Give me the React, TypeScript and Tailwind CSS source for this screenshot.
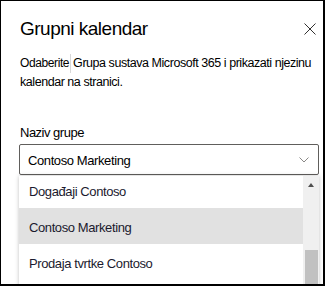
import React from "react"

// Items shown in the open group dropdown
const groups = ["Događaji Contoso", "Contoso Marketing", "Prodaja tvrtke Contoso"]

export default function App() {
  return (
    <div
      className="relative w-[325px] h-[286px] bg-white border-l border-t border-r-2 border-b-2 border-black overflow-hidden pl-[19px] text-black"
      style={{ fontFamily: '"Liberation Sans", Arial, sans-serif' }}
    >
      {/* Header */}
      <div className="flex items-start justify-between pt-[15px] pr-[7px]">
        <h1 className="text-[19px] leading-[26px] tracking-[-0.5px]">Grupni kalendar</h1>
        <button className="mt-[7px] text-[#323130]">
          <svg width="12" height="12" viewBox="0 0 12 12" fill="none" stroke="currentColor" strokeWidth="1">
            <path d="M0.5 0.5 L11.5 11.5 M11.5 0.5 L0.5 11.5" />
          </svg>
        </button>
      </div>

      {/* Description */}
      <p className="mt-[12px] text-[12.5px] leading-[19px] tracking-[-0.45px]">
        <span className="whitespace-nowrap">
          <span className="inline-block text-[12px] leading-[19px] tracking-[-0.4px] border-r border-[#d8d8d8] pr-[1px] mr-[2px]">
            Odaberite
          </span>
          Grupa sustava Microsoft 365 i prikazati njezinu
        </span>
        <br />
        kalendar na stranici.
      </p>

      {/* Group picker */}
      <label className="block mt-[31px] text-[13px] leading-[19px] tracking-[-0.5px]">Naziv grupe</label>
      <div className="relative -ml-px mt-[2px] w-[300px]">
        <div className="flex items-center justify-between h-[31px] border border-[#605e5c] rounded-[2px] pl-[8px] pr-[9px]">
          <span className="text-[13px] leading-[19px] pt-[2px] tracking-[-0.4px]">Contoso Marketing</span>
          <svg width="10" height="6" viewBox="0 0 10 6" fill="none" stroke="#8a8886" strokeWidth="1">
            <path d="M0.5 0.5 L5 5 L9.5 0.5" />
          </svg>
        </div>

        {/* Open list */}
        <div className="absolute left-0 top-[32px] w-[300px] h-[120px] flex bg-white shadow-[0_0_4px_rgba(0,0,0,0.25)] overflow-hidden">
          <div className="flex-1 -mt-[4px]">
            {groups.map((g, i) => (
              <div
                key={g}
                className={`h-[36px] pl-[10px] pt-[3px] text-[13px] leading-[33px] tracking-[-0.4px] text-[#1b1a2e] ${
                  i === 1 ? "bg-[#e1e1e1]" : ""
                }`}
              >
                {g}
              </div>
            ))}
          </div>
          {/* Scrollbar */}
          <div className="w-[16px] bg-[#f0f0f0] flex flex-col items-center">
            <svg className="mt-[7px]" width="6" height="4" viewBox="0 0 6 4">
              <path d="M0 4 L3 0 L6 4 Z" fill="#505050" />
            </svg>
            <div className="mt-[63px] w-[13px] h-[35px] bg-[#c1c1c1]" />
          </div>
        </div>
      </div>
    </div>
  )
}
